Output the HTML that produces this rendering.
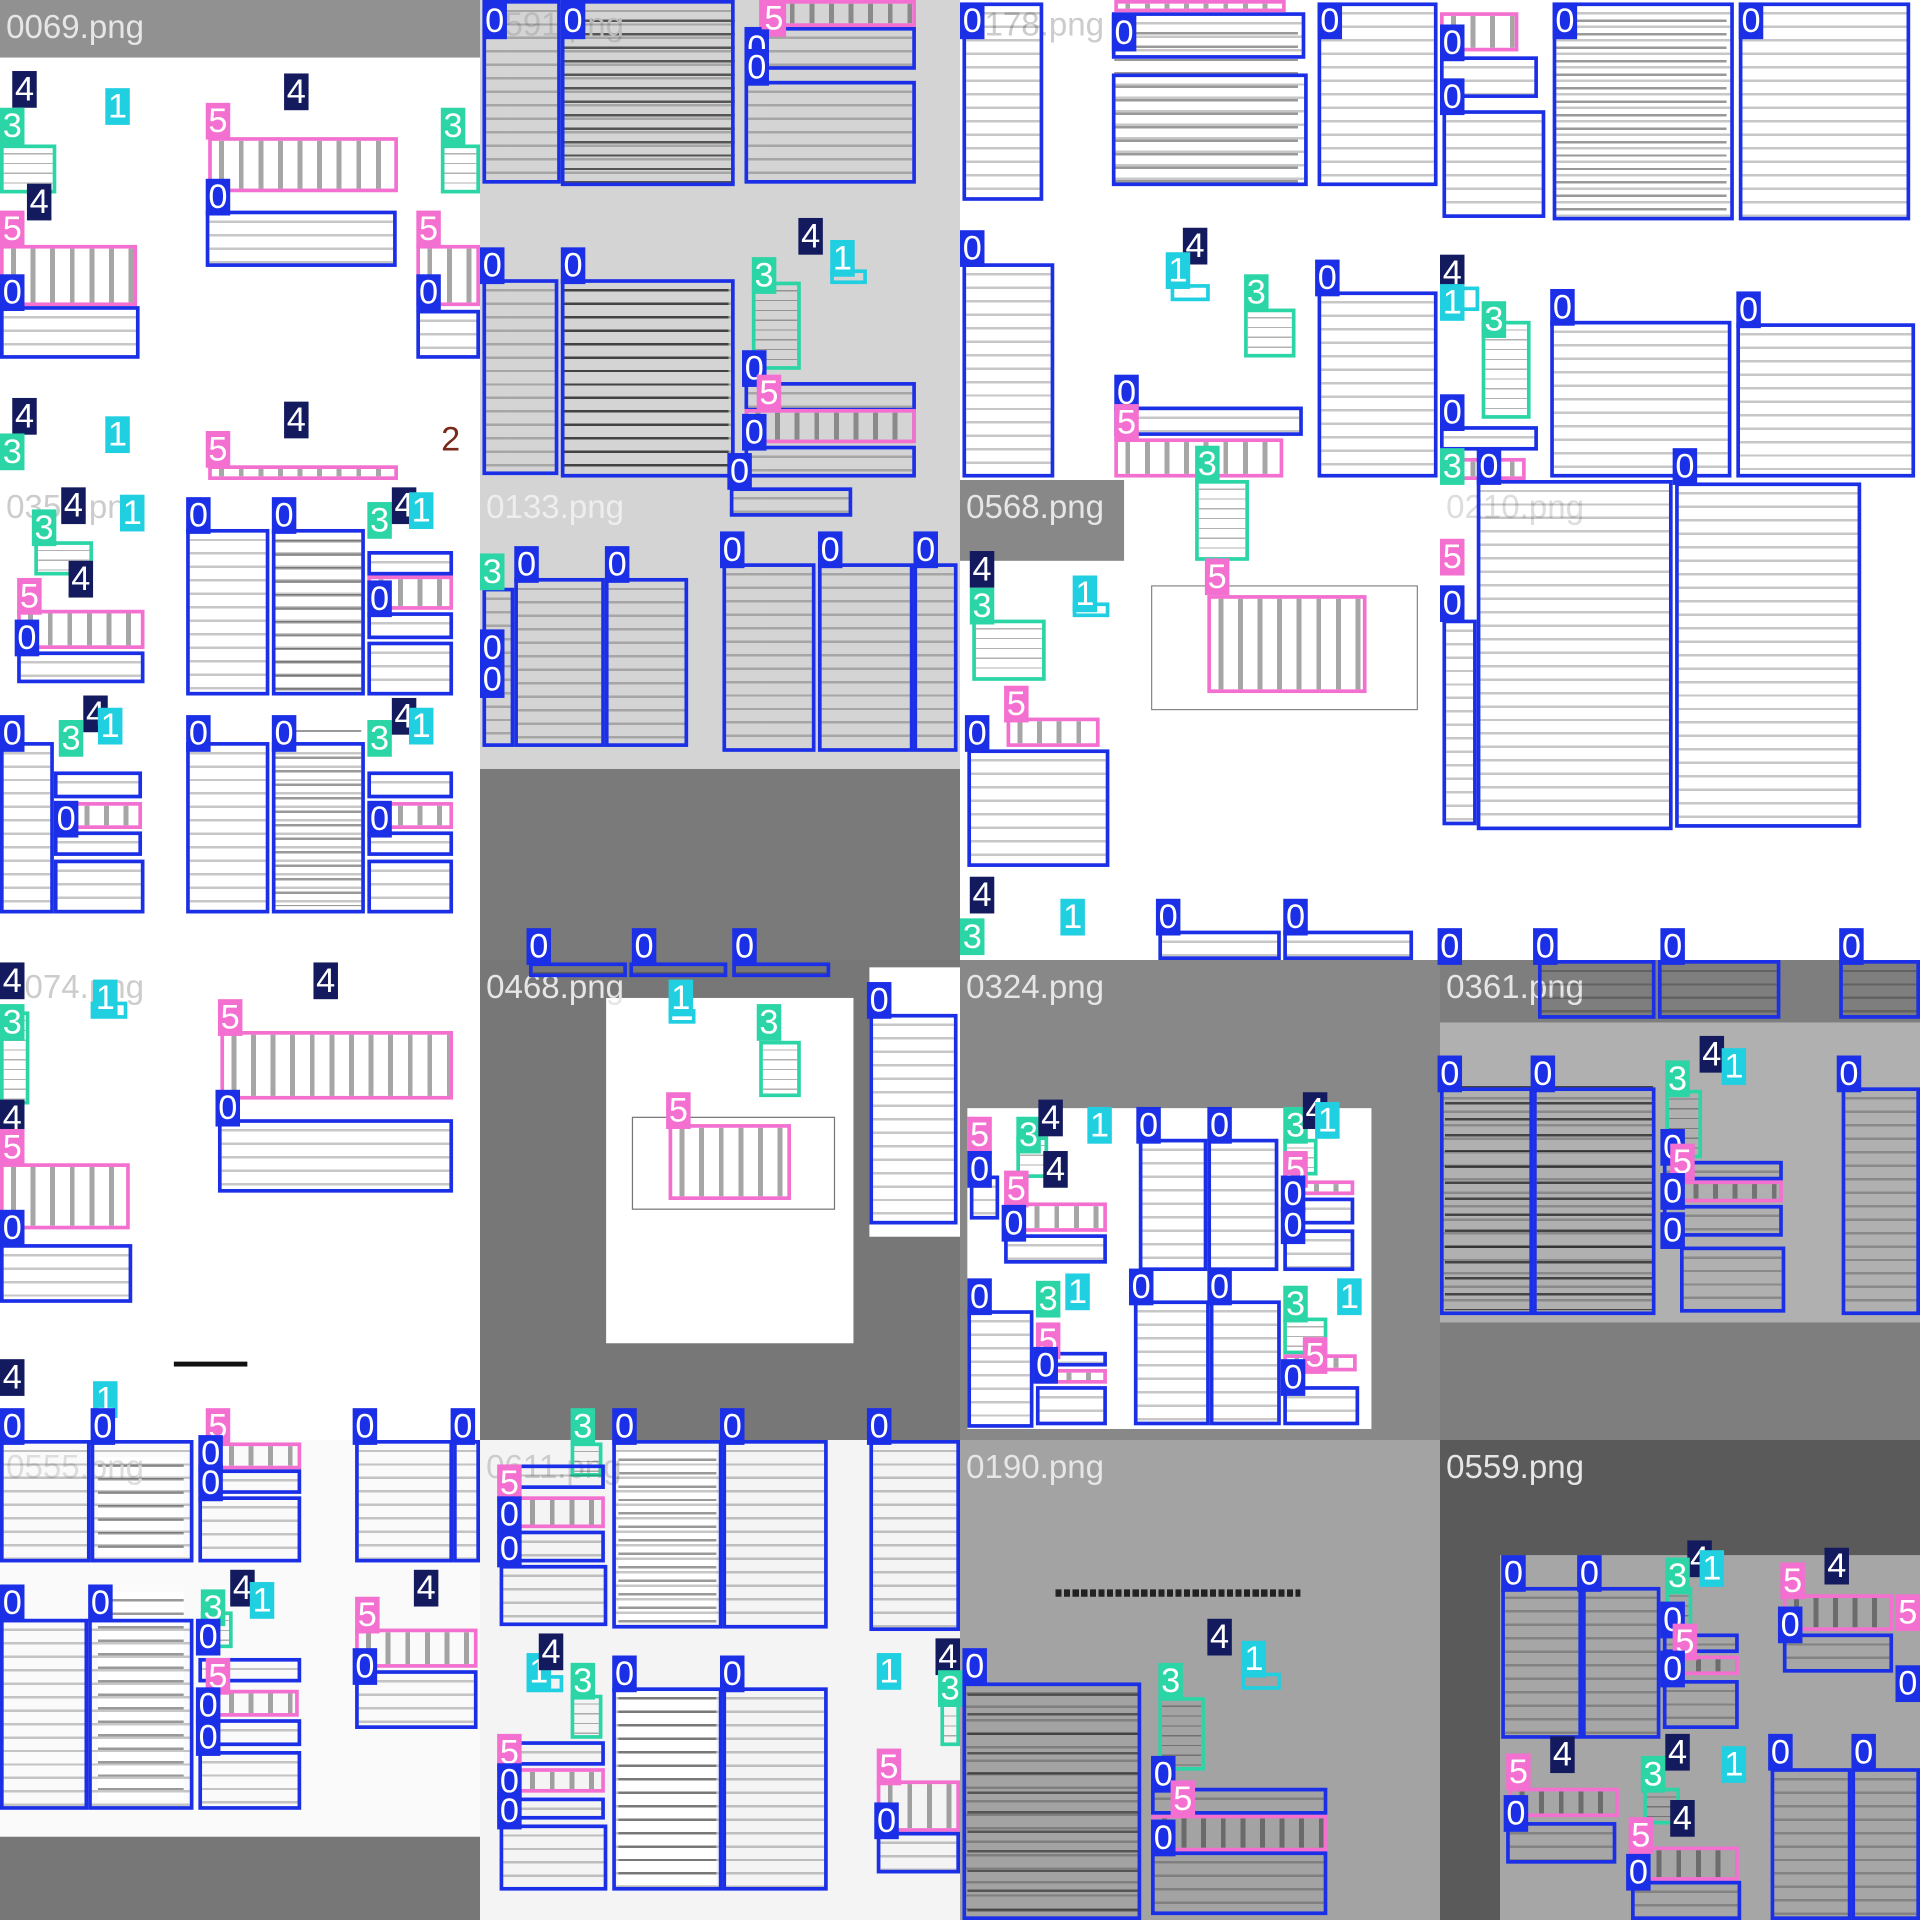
<!DOCTYPE html>
<html><head><meta charset="utf-8"><style>
html,body{margin:0;padding:0;width:1920px;height:1920px;overflow:hidden;background:#fff}
#w{position:absolute;left:0;top:0;width:1568px;height:1568px;transform:scale(1.22449);transform-origin:0 0;font-family:"Liberation Sans",sans-serif}
#w div{position:absolute;box-sizing:border-box}
.b{border:3px solid #1a2fe6;background:repeating-linear-gradient(180deg,transparent 0 5px,rgba(0,0,0,.22) 5px 7px,transparent 7px 11px)}
.p{border:3px solid #f36fd0;background:repeating-linear-gradient(90deg,transparent 0 6px,rgba(0,0,0,.35) 6px 10px,transparent 10px 16px)}
.t{border:3px solid #2bd5a6;background:repeating-linear-gradient(180deg,transparent 0 4px,rgba(0,0,0,.3) 4px 5px,transparent 5px 8px)}
.c{border:3px solid #20cfe0}.n{border:3px solid #141a5e}
.l{color:#fff;font-size:28px;line-height:30px;height:30px;width:20px;text-align:center}
.lb{background:#1a2fe6}.lp{background:#f36fd0}.lt{background:#2bd5a6}.lc{background:#20cfe0}.ln{background:#141a5e}
.g{background:#d4d4d4}.d{background:#7a7a7a}
.nm{color:#e6e6e6;font-size:27px;line-height:40px}
.tx{background:repeating-linear-gradient(180deg,#fff 0 6px,#999 6px 8px,#fff 8px 11px)}
.tg{background:repeating-linear-gradient(180deg,#d4d4d4 0 6px,#555 6px 8px,#d4d4d4 8px 11px)}
</style></head><body><div id="w">
<div style="left:0;top:0;width:392px;height:47px;background:#919191"></div>
<div class="g" style="left:392px;top:0;width:392px;height:392px"></div>
<div class="g" style="left:392px;top:392px;width:392px;height:236px"></div>
<div class="d" style="left:392px;top:628px;width:392px;height:156px"></div>
<div style="left:784px;top:392px;width:134px;height:66px;background:#888"></div>
<div style="left:392px;top:784px;width:392px;height:392px;background:#777"></div>
<div style="left:495px;top:815px;width:202px;height:282px;background:#fff"></div>
<div style="left:710px;top:790px;width:74px;height:220px;background:#fff"></div>
<div style="left:784px;top:784px;width:392px;height:392px;background:#888"></div>
<div style="left:790px;top:905px;width:330px;height:262px;background:#fff"></div>
<div style="left:1176px;top:784px;width:392px;height:392px;background:#7e7e7e"></div>
<div style="left:1176px;top:835px;width:392px;height:245px;background:#b0b0b0"></div>
<div style="left:0;top:1176px;width:392px;height:392px;background:#fafafa"></div>
<div style="left:0;top:1500px;width:392px;height:68px;background:#777"></div>
<div style="left:392px;top:1176px;width:392px;height:392px;background:#f4f4f4"></div>
<div style="left:784px;top:1176px;width:392px;height:392px;background:#a3a3a3"></div>
<div style="left:1176px;top:1176px;width:392px;height:392px;background:#5a5a5a"></div>
<div style="left:1225px;top:1270px;width:343px;height:298px;background:#a6a6a6"></div>
<div class="tg" style="left:460px;top:10px;width:140px;height:140px"></div>
<div class="tg" style="left:460px;top:230px;width:135px;height:155px"></div>
<div class="tx" style="left:910px;top:20px;width:150px;height:130px"></div>
<div class="tx" style="left:1270px;top:10px;width:140px;height:170px"></div>
<div class="tx" style="left:225px;top:435px;width:70px;height:130px"></div>
<div class="tx" style="left:225px;top:590px;width:70px;height:150px"></div>
<div class="tx" style="left:80px;top:1190px;width:70px;height:80px"></div>
<div class="tx" style="left:80px;top:1300px;width:70px;height:170px"></div>
<div class="tx" style="left:505px;top:1185px;width:80px;height:140px"></div>
<div class="tx" style="left:505px;top:1380px;width:80px;height:160px"></div>
<div style="left:790px;top:1375px;width:140px;height:190px;background:repeating-linear-gradient(180deg,#a3a3a3 0 8px,#555 8px 10px,#a3a3a3 10px 16px)"></div>
<div style="left:1180px;top:880px;width:70px;height:190px;background:repeating-linear-gradient(180deg,#b0b0b0 0 7px,#444 7px 9px,#b0b0b0 9px 13px)"></div>
<div style="left:1255px;top:880px;width:95px;height:190px;background:repeating-linear-gradient(180deg,#b0b0b0 0 7px,#444 7px 9px,#b0b0b0 9px 13px)"></div>
<div class="nm" style="left:5px;top:2px">0069.png</div>
<div class="nm" style="left:397px;top:0;color:#bbb">0591.png</div>
<div class="nm" style="left:789px;top:0;color:#ccc">0178.png</div>
<div class="nm" style="left:5px;top:394px;color:#ccc">0354.png</div>
<div class="nm" style="left:397px;top:394px;color:#eee">0133.png</div>
<div class="nm" style="left:789px;top:394px">0568.png</div>
<div class="nm" style="left:1181px;top:394px;color:#ddd">0210.png</div>
<div class="nm" style="left:5px;top:786px;color:#ccc">0074.png</div>
<div class="nm" style="left:397px;top:786px">0468.png</div>
<div class="nm" style="left:789px;top:786px">0324.png</div>
<div class="nm" style="left:1181px;top:786px">0361.png</div>
<div class="nm" style="left:5px;top:1178px;color:#ddd">0555.png</div>
<div class="nm" style="left:397px;top:1178px;color:#ccc">0611.png</div>
<div class="nm" style="left:789px;top:1178px">0190.png</div>
<div class="nm" style="left:1181px;top:1178px">0559.png</div>
<div class="p" style="left:170px;top:112px;width:155px;height:45px"></div>
<div class="b" style="left:168px;top:172px;width:156px;height:46px"></div>
<div class="p" style="left:0;top:200px;width:112px;height:50px"></div>
<div class="b" style="left:0;top:250px;width:114px;height:43px"></div>
<div class="t" style="left:0;top:118px;width:46px;height:40px"></div>
<div class="p" style="left:340px;top:200px;width:52px;height:50px"></div>
<div class="b" style="left:340px;top:253px;width:52px;height:40px"></div>
<div class="t" style="left:360px;top:118px;width:32px;height:40px"></div>
<div class="p" style="left:170px;top:380px;width:155px;height:12px"></div>
<div class="l ln" style="left:10px;top:58px">4</div><div class="l lt" style="left:0;top:88px">3</div><div class="l lc" style="left:86px;top:72px">1</div>
<div class="l ln" style="left:232px;top:60px">4</div><div class="l lp" style="left:168px;top:84px">5</div><div class="l lb" style="left:168px;top:146px">0</div>
<div class="l ln" style="left:22px;top:150px">4</div><div class="l lp" style="left:0;top:172px">5</div><div class="l lb" style="left:0;top:224px">0</div>
<div class="l lt" style="left:360px;top:88px">3</div><div class="l lp" style="left:340px;top:172px">5</div><div class="l lb" style="left:340px;top:224px">0</div>
<div class="l ln" style="left:10px;top:325px">4</div><div class="l lt" style="left:0;top:354px">3</div><div class="l lc" style="left:86px;top:340px">1</div>
<div class="l ln" style="left:232px;top:328px">4</div><div class="l lp" style="left:168px;top:352px">5</div>
<div class="l" style="left:358px;top:344px;color:#7a2a1a;background:none">2</div>
<div class="b" style="left:394px;top:0;width:64px;height:150px"></div>
<div class="b" style="left:458px;top:0;width:142px;height:152px"></div>
<div class="b" style="left:608px;top:22px;width:140px;height:35px"></div>
<div class="b" style="left:608px;top:66px;width:140px;height:84px"></div>
<div class="p" style="left:620px;top:0;width:128px;height:22px"></div>
<div class="b" style="left:394px;top:228px;width:62px;height:160px"></div>
<div class="b" style="left:458px;top:228px;width:142px;height:162px"></div>
<div class="t" style="left:614px;top:230px;width:40px;height:72px"></div>
<div class="c" style="left:678px;top:220px;width:30px;height:12px"></div>
<div class="b" style="left:608px;top:312px;width:140px;height:24px"></div>
<div class="p" style="left:608px;top:334px;width:140px;height:28px"></div>
<div class="b" style="left:608px;top:364px;width:140px;height:26px"></div>
<div class="b" style="left:596px;top:398px;width:100px;height:24px"></div>
<div class="l lb" style="left:394px;top:2px">0</div><div class="l lb" style="left:458px;top:2px">0</div><div class="l lp" style="left:622px;top:0">5</div><div class="l lb" style="left:608px;top:24px">0</div><div class="l lb" style="left:608px;top:40px">0</div>
<div class="l lb" style="left:392px;top:202px">0</div><div class="l lb" style="left:458px;top:202px">0</div><div class="l ln" style="left:652px;top:178px">4</div><div class="l lt" style="left:614px;top:210px">3</div><div class="l lc" style="left:678px;top:196px">1</div>
<div class="l lb" style="left:606px;top:286px">0</div><div class="l lp" style="left:618px;top:306px">5</div><div class="l lb" style="left:606px;top:338px">0</div><div class="l lb" style="left:594px;top:370px">0</div>
<div class="b" style="left:786px;top:2px;width:66px;height:162px"></div>
<div class="b" style="left:908px;top:10px;width:158px;height:38px"></div>
<div class="b" style="left:908px;top:60px;width:160px;height:92px"></div>
<div class="p" style="left:910px;top:0;width:140px;height:10px"></div>
<div class="b" style="left:786px;top:215px;width:75px;height:175px"></div>
<div class="c" style="left:956px;top:232px;width:32px;height:14px"></div>
<div class="t" style="left:1016px;top:252px;width:42px;height:40px"></div>
<div class="b" style="left:910px;top:332px;width:154px;height:24px"></div>
<div class="p" style="left:910px;top:358px;width:138px;height:32px"></div>
<div class="b" style="left:1076px;top:238px;width:98px;height:152px"></div>
<div class="b" style="left:1076px;top:2px;width:98px;height:150px"></div>
<div class="l lb" style="left:784px;top:2px">0</div><div class="l lb" style="left:908px;top:12px">0</div><div class="l lb" style="left:1076px;top:2px">0</div>
<div class="l lb" style="left:784px;top:188px">0</div><div class="l ln" style="left:966px;top:186px">4</div><div class="l lc" style="left:952px;top:206px">1</div><div class="l lt" style="left:1016px;top:224px">3</div><div class="l lb" style="left:1074px;top:212px">0</div>
<div class="l lb" style="left:910px;top:306px">0</div><div class="l lp" style="left:910px;top:330px">5</div><div class="l lt" style="left:976px;top:364px">3</div>
<div class="p" style="left:1176px;top:10px;width:64px;height:32px"></div>
<div class="b" style="left:1176px;top:46px;width:80px;height:34px"></div>
<div class="b" style="left:1178px;top:90px;width:84px;height:88px"></div>
<div class="b" style="left:1268px;top:2px;width:148px;height:178px"></div>
<div class="b" style="left:1420px;top:2px;width:140px;height:178px"></div>
<div class="c" style="left:1178px;top:234px;width:30px;height:20px"></div>
<div class="t" style="left:1210px;top:262px;width:40px;height:80px"></div>
<div class="b" style="left:1176px;top:348px;width:80px;height:20px"></div>
<div class="p" style="left:1176px;top:374px;width:70px;height:18px"></div>
<div class="b" style="left:1266px;top:262px;width:148px;height:128px"></div>
<div class="b" style="left:1418px;top:264px;width:146px;height:126px"></div>
<div class="l lb" style="left:1176px;top:20px">0</div><div class="l lb" style="left:1176px;top:64px">0</div><div class="l lb" style="left:1268px;top:2px">0</div><div class="l lb" style="left:1420px;top:2px">0</div>
<div class="l ln" style="left:1176px;top:208px">4</div><div class="l lc" style="left:1176px;top:232px">1</div><div class="l lt" style="left:1210px;top:246px">3</div><div class="l lb" style="left:1266px;top:236px">0</div><div class="l lb" style="left:1418px;top:238px">0</div>
<div class="l lb" style="left:1176px;top:322px">0</div><div class="l lt" style="left:1176px;top:366px">3</div><div class="l lb" style="left:1206px;top:366px">0</div><div class="l lb" style="left:1366px;top:366px">0</div>
<div class="t" style="left:28px;top:442px;width:48px;height:28px"></div>
<div class="p" style="left:14px;top:498px;width:104px;height:32px"></div>
<div class="b" style="left:14px;top:532px;width:104px;height:26px"></div>
<div class="b" style="left:152px;top:432px;width:68px;height:136px"></div>
<div class="b" style="left:222px;top:432px;width:76px;height:136px"></div>
<div class="b" style="left:300px;top:450px;width:70px;height:20px"></div>
<div class="p" style="left:300px;top:470px;width:70px;height:28px"></div>
<div class="b" style="left:300px;top:500px;width:70px;height:22px"></div>
<div class="b" style="left:300px;top:524px;width:70px;height:44px"></div>
<div class="b" style="left:0;top:606px;width:44px;height:140px"></div>
<div class="b" style="left:44px;top:630px;width:72px;height:22px"></div>
<div class="p" style="left:44px;top:655px;width:72px;height:22px"></div>
<div class="b" style="left:44px;top:679px;width:72px;height:20px"></div>
<div class="b" style="left:44px;top:702px;width:74px;height:44px"></div>
<div class="b" style="left:152px;top:606px;width:68px;height:140px"></div>
<div class="b" style="left:222px;top:606px;width:76px;height:140px"></div>
<div class="b" style="left:300px;top:630px;width:70px;height:22px"></div>
<div class="p" style="left:300px;top:655px;width:70px;height:22px"></div>
<div class="b" style="left:300px;top:679px;width:70px;height:20px"></div>
<div class="b" style="left:300px;top:702px;width:70px;height:44px"></div>
<div class="l ln" style="left:50px;top:398px">4</div><div class="l lt" style="left:26px;top:416px">3</div><div class="l lc" style="left:98px;top:404px">1</div><div class="l ln" style="left:56px;top:458px">4</div><div class="l lp" style="left:14px;top:472px">5</div><div class="l lb" style="left:12px;top:506px">0</div>
<div class="l lb" style="left:152px;top:406px">0</div><div class="l lb" style="left:222px;top:406px">0</div><div class="l lt" style="left:300px;top:410px">3</div><div class="l ln" style="left:320px;top:398px">4</div><div class="l lc" style="left:334px;top:402px">1</div><div class="l lb" style="left:300px;top:474px">0</div>
<div class="l lb" style="left:0;top:584px">0</div><div class="l ln" style="left:68px;top:568px">4</div><div class="l lt" style="left:48px;top:588px">3</div><div class="l lc" style="left:80px;top:578px">1</div><div class="l lb" style="left:44px;top:654px">0</div>
<div class="l lb" style="left:152px;top:584px">0</div><div class="l lb" style="left:222px;top:584px">0</div><div class="l lt" style="left:300px;top:588px">3</div><div class="l ln" style="left:320px;top:570px">4</div><div class="l lc" style="left:334px;top:578px">1</div><div class="l lb" style="left:300px;top:654px">0</div>
<div class="b" style="left:394px;top:480px;width:26px;height:130px"></div>
<div class="b" style="left:420px;top:472px;width:74px;height:138px"></div>
<div class="b" style="left:494px;top:472px;width:68px;height:138px"></div>
<div class="b" style="left:590px;top:460px;width:76px;height:154px"></div>
<div class="b" style="left:668px;top:460px;width:78px;height:154px"></div>
<div class="b" style="left:746px;top:460px;width:36px;height:154px"></div>
<div class="l lt" style="left:392px;top:452px">3</div><div class="l lb" style="left:420px;top:446px">0</div><div class="l lb" style="left:494px;top:446px">0</div><div class="l lb" style="left:588px;top:434px">0</div><div class="l lb" style="left:668px;top:434px">0</div><div class="l lb" style="left:746px;top:434px">0</div>
<div class="l lb" style="left:392px;top:514px">0</div><div class="l lb" style="left:392px;top:540px">0</div>
<div class="b" style="left:432px;top:786px;width:80px;height:12px"></div>
<div class="b" style="left:514px;top:786px;width:80px;height:12px"></div>
<div class="b" style="left:598px;top:786px;width:80px;height:12px"></div>
<div class="l lb" style="left:430px;top:758px">0</div><div class="l lb" style="left:516px;top:758px">0</div><div class="l lb" style="left:598px;top:758px">0</div>
<div class="t" style="left:976px;top:392px;width:44px;height:66px"></div>
<div class="p" style="left:986px;top:486px;width:130px;height:80px"></div>
<div style="left:940px;top:478px;width:218px;height:102px;border:1px solid #888"></div>
<div class="t" style="left:794px;top:506px;width:60px;height:50px"></div>
<div class="c" style="left:876px;top:492px;width:30px;height:12px"></div>
<div class="p" style="left:822px;top:586px;width:76px;height:24px"></div>
<div class="b" style="left:790px;top:612px;width:116px;height:96px"></div>
<div class="b" style="left:946px;top:760px;width:100px;height:24px"></div>
<div class="b" style="left:1048px;top:760px;width:106px;height:24px"></div>
<div class="l lp" style="left:984px;top:456px">5</div><div class="l ln" style="left:792px;top:450px">4</div><div class="l lt" style="left:792px;top:480px">3</div><div class="l lc" style="left:876px;top:470px">1</div><div class="l lp" style="left:820px;top:560px">5</div><div class="l lb" style="left:788px;top:584px">0</div>
<div class="l ln" style="left:792px;top:716px">4</div><div class="l lt" style="left:784px;top:750px">3</div><div class="l lc" style="left:866px;top:734px">1</div><div class="l lb" style="left:944px;top:734px">0</div><div class="l lb" style="left:1048px;top:734px">0</div>
<div class="b" style="left:1178px;top:506px;width:28px;height:168px"></div>
<div class="b" style="left:1206px;top:392px;width:160px;height:286px"></div>
<div class="b" style="left:1368px;top:394px;width:152px;height:282px"></div>
<div class="l lp" style="left:1176px;top:440px">5</div><div class="l lb" style="left:1176px;top:478px">0</div>
<div class="l lb" style="left:1174px;top:758px">0</div><div class="l lb" style="left:1252px;top:758px">0</div><div class="l lb" style="left:1356px;top:758px">0</div><div class="l lb" style="left:1502px;top:758px">0</div>
<div class="t" style="left:0;top:826px;width:24px;height:76px"></div>
<div class="c" style="left:74px;top:818px;width:30px;height:14px"></div>
<div class="p" style="left:180px;top:842px;width:190px;height:56px"></div>
<div class="b" style="left:178px;top:914px;width:192px;height:60px"></div>
<div class="p" style="left:0;top:950px;width:106px;height:54px"></div>
<div class="b" style="left:0;top:1016px;width:108px;height:48px"></div>
<div class="l ln" style="left:0;top:786px">4</div><div class="l lt" style="left:0;top:820px">3</div><div class="l lc" style="left:76px;top:800px">1</div><div class="l ln" style="left:256px;top:786px">4</div><div class="l lp" style="left:178px;top:816px">5</div><div class="l lb" style="left:176px;top:890px">0</div>
<div class="l ln" style="left:0;top:898px">4</div><div class="l lp" style="left:0;top:922px">5</div><div class="l lb" style="left:0;top:988px">0</div>
<div style="left:142px;top:1112px;width:60px;height:4px;background:#111"></div>
<div class="c" style="left:546px;top:824px;width:22px;height:12px"></div>
<div class="t" style="left:620px;top:850px;width:34px;height:46px"></div>
<div class="p" style="left:546px;top:918px;width:100px;height:62px"></div>
<div style="left:516px;top:912px;width:166px;height:76px;border:1px solid #777"></div>
<div class="b" style="left:710px;top:828px;width:72px;height:172px"></div>
<div class="l lc" style="left:546px;top:800px">1</div><div class="l lt" style="left:618px;top:820px">3</div><div class="l lp" style="left:544px;top:892px">5</div><div class="l lb" style="left:708px;top:802px">0</div>
<div class="t" style="left:830px;top:928px;width:26px;height:34px"></div>
<div class="p" style="left:820px;top:982px;width:84px;height:24px"></div>
<div class="b" style="left:820px;top:1008px;width:84px;height:24px"></div>
<div class="b" style="left:792px;top:960px;width:24px;height:36px"></div>
<div class="b" style="left:930px;top:930px;width:56px;height:108px"></div>
<div class="b" style="left:986px;top:930px;width:58px;height:108px"></div>
<div class="t" style="left:1048px;top:930px;width:28px;height:30px"></div>
<div class="p" style="left:1048px;top:964px;width:58px;height:12px"></div>
<div class="b" style="left:1048px;top:978px;width:58px;height:22px"></div>
<div class="b" style="left:1048px;top:1004px;width:58px;height:34px"></div>
<div class="b" style="left:790px;top:1070px;width:54px;height:96px"></div>
<div class="b" style="left:846px;top:1104px;width:58px;height:12px"></div>
<div class="p" style="left:846px;top:1118px;width:58px;height:12px"></div>
<div class="b" style="left:846px;top:1132px;width:58px;height:32px"></div>
<div class="b" style="left:926px;top:1062px;width:62px;height:102px"></div>
<div class="b" style="left:988px;top:1062px;width:58px;height:102px"></div>
<div class="t" style="left:1048px;top:1076px;width:36px;height:30px"></div>
<div class="p" style="left:1048px;top:1106px;width:60px;height:14px"></div>
<div class="b" style="left:1048px;top:1132px;width:62px;height:32px"></div>
<div class="l lp" style="left:790px;top:912px">5</div><div class="l lb" style="left:790px;top:940px">0</div><div class="l lt" style="left:830px;top:912px">3</div><div class="l ln" style="left:848px;top:898px">4</div><div class="l lc" style="left:888px;top:904px">1</div><div class="l ln" style="left:852px;top:940px">4</div><div class="l lp" style="left:820px;top:956px">5</div><div class="l lb" style="left:818px;top:984px">0</div>
<div class="l lb" style="left:928px;top:904px">0</div><div class="l lb" style="left:986px;top:904px">0</div><div class="l lt" style="left:1048px;top:904px">3</div><div class="l ln" style="left:1064px;top:892px">4</div><div class="l lc" style="left:1074px;top:900px">1</div><div class="l lp" style="left:1048px;top:940px">5</div><div class="l lb" style="left:1046px;top:960px">0</div><div class="l lb" style="left:1046px;top:986px">0</div>
<div class="l lb" style="left:790px;top:1044px">0</div><div class="l lt" style="left:846px;top:1046px">3</div><div class="l lc" style="left:870px;top:1040px">1</div><div class="l lp" style="left:846px;top:1080px">5</div><div class="l lb" style="left:844px;top:1100px">0</div>
<div class="l lb" style="left:922px;top:1036px">0</div><div class="l lb" style="left:986px;top:1036px">0</div><div class="l lt" style="left:1048px;top:1050px">3</div><div class="l lc" style="left:1092px;top:1044px">1</div><div class="l lp" style="left:1064px;top:1092px">5</div><div class="l lb" style="left:1046px;top:1110px">0</div>
<div class="b" style="left:1176px;top:888px;width:76px;height:186px"></div>
<div class="b" style="left:1252px;top:888px;width:100px;height:186px"></div>
<div class="t" style="left:1360px;top:890px;width:30px;height:56px"></div>
<div class="b" style="left:1358px;top:948px;width:98px;height:16px"></div>
<div class="p" style="left:1358px;top:964px;width:98px;height:18px"></div>
<div class="b" style="left:1358px;top:984px;width:98px;height:26px"></div>
<div class="b" style="left:1372px;top:1018px;width:86px;height:54px"></div>
<div class="b" style="left:1504px;top:888px;width:64px;height:186px"></div>
<div class="b" style="left:1256px;top:784px;width:96px;height:48px"></div>
<div class="b" style="left:1354px;top:784px;width:100px;height:48px"></div>
<div class="b" style="left:1502px;top:784px;width:66px;height:48px"></div>
<div class="l lb" style="left:1174px;top:862px">0</div><div class="l lb" style="left:1250px;top:862px">0</div><div class="l lt" style="left:1360px;top:866px">3</div><div class="l ln" style="left:1388px;top:846px">4</div><div class="l lc" style="left:1406px;top:856px">1</div><div class="l lb" style="left:1500px;top:862px">0</div>
<div class="l lb" style="left:1356px;top:922px">0</div><div class="l lp" style="left:1364px;top:934px">5</div><div class="l lb" style="left:1356px;top:958px">0</div><div class="l lb" style="left:1356px;top:990px">0</div>
<div class="b" style="left:0;top:1176px;width:74px;height:100px"></div>
<div class="b" style="left:74px;top:1176px;width:84px;height:100px"></div>
<div class="p" style="left:162px;top:1178px;width:84px;height:22px"></div>
<div class="b" style="left:162px;top:1200px;width:84px;height:20px"></div>
<div class="b" style="left:162px;top:1222px;width:84px;height:54px"></div>
<div class="b" style="left:290px;top:1176px;width:80px;height:100px"></div>
<div class="b" style="left:370px;top:1176px;width:22px;height:100px"></div>
<div class="b" style="left:0;top:1322px;width:72px;height:156px"></div>
<div class="b" style="left:72px;top:1322px;width:86px;height:156px"></div>
<div class="t" style="left:164px;top:1316px;width:26px;height:30px"></div>
<div class="b" style="left:162px;top:1354px;width:84px;height:20px"></div>
<div class="p" style="left:162px;top:1380px;width:82px;height:22px"></div>
<div class="b" style="left:162px;top:1404px;width:84px;height:22px"></div>
<div class="b" style="left:162px;top:1430px;width:84px;height:48px"></div>
<div class="p" style="left:290px;top:1330px;width:100px;height:32px"></div>
<div class="b" style="left:290px;top:1364px;width:100px;height:48px"></div>
<div class="l ln" style="left:0;top:1110px">4</div><div class="l lc" style="left:76px;top:1128px">1</div><div class="l lb" style="left:0;top:1150px">0</div><div class="l lb" style="left:74px;top:1150px">0</div><div class="l lp" style="left:168px;top:1150px">5</div><div class="l lb" style="left:162px;top:1172px">0</div><div class="l lb" style="left:162px;top:1196px">0</div><div class="l lb" style="left:288px;top:1150px">0</div><div class="l lb" style="left:368px;top:1150px">0</div>
<div class="l lb" style="left:0;top:1294px">0</div><div class="l lb" style="left:72px;top:1294px">0</div><div class="l ln" style="left:188px;top:1282px">4</div><div class="l lt" style="left:164px;top:1298px">3</div><div class="l lc" style="left:204px;top:1292px">1</div><div class="l lb" style="left:160px;top:1322px">0</div><div class="l lp" style="left:168px;top:1354px">5</div><div class="l lb" style="left:160px;top:1378px">0</div><div class="l lb" style="left:160px;top:1404px">0</div>
<div class="l lp" style="left:290px;top:1304px">5</div><div class="l ln" style="left:338px;top:1282px">4</div><div class="l lb" style="left:288px;top:1346px">0</div>
<div class="t" style="left:466px;top:1178px;width:26px;height:28px"></div>
<div class="b" style="left:408px;top:1196px;width:86px;height:20px"></div>
<div class="p" style="left:408px;top:1222px;width:86px;height:26px"></div>
<div class="b" style="left:408px;top:1250px;width:86px;height:26px"></div>
<div class="b" style="left:408px;top:1278px;width:88px;height:50px"></div>
<div class="b" style="left:500px;top:1176px;width:90px;height:154px"></div>
<div class="b" style="left:590px;top:1176px;width:86px;height:154px"></div>
<div class="b" style="left:710px;top:1176px;width:74px;height:156px"></div>
<div class="c" style="left:430px;top:1368px;width:30px;height:14px"></div>
<div class="t" style="left:466px;top:1384px;width:26px;height:36px"></div>
<div class="b" style="left:408px;top:1422px;width:86px;height:20px"></div>
<div class="p" style="left:408px;top:1444px;width:86px;height:20px"></div>
<div class="b" style="left:408px;top:1468px;width:86px;height:18px"></div>
<div class="b" style="left:408px;top:1490px;width:88px;height:54px"></div>
<div class="b" style="left:500px;top:1378px;width:90px;height:166px"></div>
<div class="b" style="left:590px;top:1378px;width:86px;height:166px"></div>
<div class="t" style="left:768px;top:1378px;width:16px;height:48px"></div>
<div class="p" style="left:716px;top:1454px;width:68px;height:42px"></div>
<div class="b" style="left:716px;top:1496px;width:68px;height:34px"></div>
<div class="l lt" style="left:466px;top:1150px">3</div><div class="l lb" style="left:500px;top:1150px">0</div><div class="l lb" style="left:588px;top:1150px">0</div><div class="l lb" style="left:708px;top:1150px">0</div>
<div class="l lp" style="left:406px;top:1196px">5</div><div class="l lb" style="left:406px;top:1222px">0</div><div class="l lb" style="left:406px;top:1250px">0</div>
<div class="l lc" style="left:430px;top:1350px">1</div><div class="l ln" style="left:440px;top:1334px">4</div><div class="l lt" style="left:466px;top:1358px">3</div><div class="l lb" style="left:500px;top:1352px">0</div><div class="l lb" style="left:588px;top:1352px">0</div><div class="l lc" style="left:716px;top:1350px">1</div><div class="l ln" style="left:764px;top:1338px">4</div><div class="l lt" style="left:766px;top:1364px">3</div>
<div class="l lp" style="left:406px;top:1416px">5</div><div class="l lb" style="left:406px;top:1440px">0</div><div class="l lb" style="left:406px;top:1464px">0</div><div class="l lp" style="left:716px;top:1428px">5</div><div class="l lb" style="left:714px;top:1472px">0</div>
<div class="b" style="left:786px;top:1374px;width:146px;height:194px"></div>
<div class="c" style="left:1014px;top:1366px;width:32px;height:14px"></div>
<div class="t" style="left:946px;top:1386px;width:38px;height:60px"></div>
<div class="p" style="left:940px;top:1482px;width:144px;height:30px"></div>
<div class="b" style="left:940px;top:1460px;width:144px;height:22px"></div>
<div class="b" style="left:940px;top:1512px;width:144px;height:52px"></div>
<div class="l lb" style="left:786px;top:1346px">0</div><div class="l ln" style="left:986px;top:1322px">4</div><div class="l lc" style="left:1014px;top:1340px">1</div><div class="l lt" style="left:946px;top:1358px">3</div><div class="l lb" style="left:940px;top:1434px">0</div><div class="l lp" style="left:956px;top:1454px">5</div><div class="l lb" style="left:940px;top:1486px">0</div>
<div style="left:862px;top:1298px;width:200px;height:6px;background:repeating-linear-gradient(90deg,#222 0 5px,#a3a3a3 5px 7px)"></div>
<div class="b" style="left:1226px;top:1296px;width:66px;height:124px"></div>
<div class="b" style="left:1292px;top:1296px;width:64px;height:124px"></div>
<div class="t" style="left:1360px;top:1296px;width:22px;height:40px"></div>
<div class="b" style="left:1358px;top:1334px;width:62px;height:16px"></div>
<div class="p" style="left:1360px;top:1352px;width:60px;height:16px"></div>
<div class="b" style="left:1358px;top:1372px;width:62px;height:40px"></div>
<div class="p" style="left:1456px;top:1302px;width:90px;height:30px"></div>
<div class="b" style="left:1456px;top:1334px;width:90px;height:32px"></div>
<div class="p" style="left:1232px;top:1460px;width:90px;height:24px"></div>
<div class="b" style="left:1230px;top:1488px;width:90px;height:34px"></div>
<div class="t" style="left:1342px;top:1460px;width:30px;height:30px"></div>
<div class="p" style="left:1344px;top:1508px;width:76px;height:28px"></div>
<div class="b" style="left:1332px;top:1536px;width:90px;height:32px"></div>
<div class="b" style="left:1446px;top:1444px;width:66px;height:124px"></div>
<div class="b" style="left:1512px;top:1444px;width:56px;height:124px"></div>
<div class="l lb" style="left:1226px;top:1270px">0</div><div class="l lb" style="left:1288px;top:1270px">0</div><div class="l ln" style="left:1378px;top:1258px">4</div><div class="l lt" style="left:1360px;top:1272px">3</div><div class="l lc" style="left:1388px;top:1266px">1</div><div class="l lp" style="left:1454px;top:1276px">5</div><div class="l ln" style="left:1490px;top:1264px">4</div><div class="l lb" style="left:1452px;top:1312px">0</div><div class="l lp" style="left:1548px;top:1302px">5</div><div class="l lb" style="left:1548px;top:1360px">0</div>
<div class="l lb" style="left:1356px;top:1308px">0</div><div class="l lp" style="left:1366px;top:1326px">5</div><div class="l lb" style="left:1356px;top:1348px">0</div>
<div class="l lp" style="left:1230px;top:1432px">5</div><div class="l ln" style="left:1266px;top:1418px">4</div><div class="l lb" style="left:1228px;top:1466px">0</div><div class="l lt" style="left:1340px;top:1434px">3</div><div class="l ln" style="left:1360px;top:1416px">4</div><div class="l lc" style="left:1406px;top:1426px">1</div><div class="l ln" style="left:1364px;top:1470px">4</div><div class="l lp" style="left:1330px;top:1484px">5</div><div class="l lb" style="left:1328px;top:1514px">0</div>
<div class="l lb" style="left:1444px;top:1416px">0</div><div class="l lb" style="left:1512px;top:1416px">0</div>
</div></body></html>
